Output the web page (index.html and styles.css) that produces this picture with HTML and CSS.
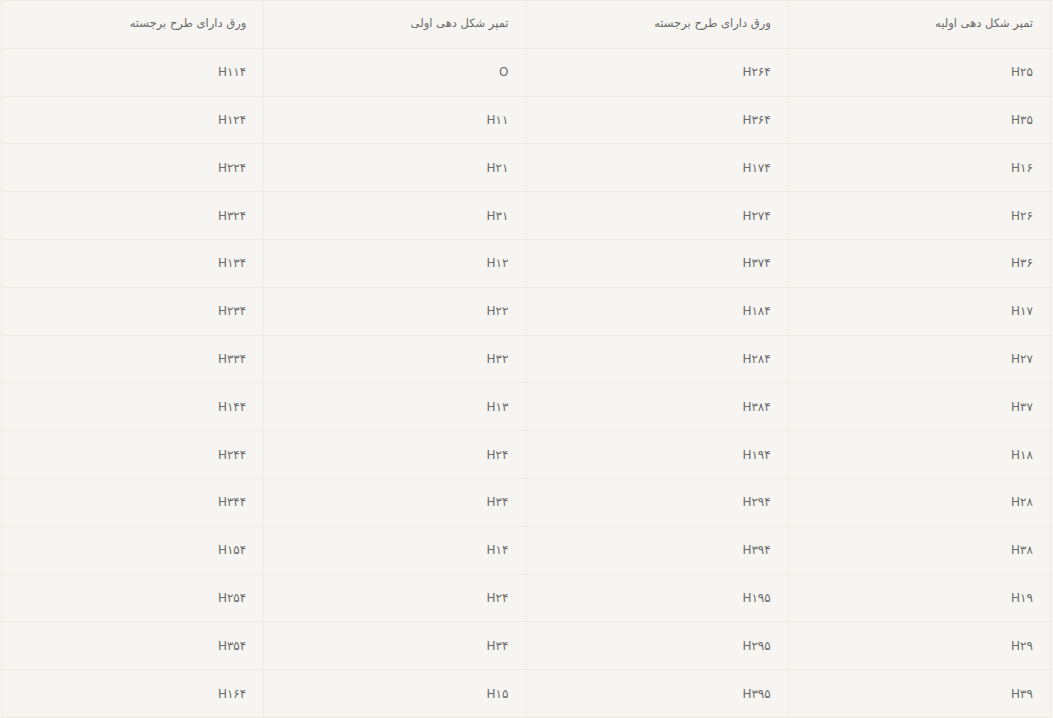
FILE: index.html
```html
<!DOCTYPE html>
<html lang="fa" dir="rtl">
<head>
<meta charset="utf-8">
<link rel="stylesheet" href="styles.css">
</head>
<body>
<table class="grid">
<thead>
<tr><th>تمپر شکل دهی اولیه</th><th>ورق دارای طرح برجسته</th><th>تمپر شکل دهی اولی</th><th>ورق دارای طرح برجسته</th></tr>
</thead>
<tbody>
<tr><td>H۲۵</td><td>H۲۶۴</td><td>O</td><td>H۱۱۴</td></tr>
<tr><td>H۳۵</td><td>H۳۶۴</td><td>H۱۱</td><td>H۱۲۴</td></tr>
<tr><td>H۱۶</td><td>H۱۷۴</td><td>H۲۱</td><td>H۲۲۴</td></tr>
<tr><td>H۲۶</td><td>H۲۷۴</td><td>H۳۱</td><td>H۳۲۴</td></tr>
<tr><td>H۳۶</td><td>H۳۷۴</td><td>H۱۲</td><td>H۱۳۴</td></tr>
<tr><td>H۱۷</td><td>H۱۸۴</td><td>H۲۲</td><td>H۲۳۴</td></tr>
<tr><td>H۲۷</td><td>H۲۸۴</td><td>H۳۲</td><td>H۳۳۴</td></tr>
<tr><td>H۳۷</td><td>H۳۸۴</td><td>H۱۳</td><td>H۱۴۴</td></tr>
<tr><td>H۱۸</td><td>H۱۹۴</td><td>H۲۴</td><td>H۲۴۴</td></tr>
<tr><td>H۲۸</td><td>H۲۹۴</td><td>H۳۴</td><td>H۳۴۴</td></tr>
<tr><td>H۳۸</td><td>H۳۹۴</td><td>H۱۴</td><td>H۱۵۴</td></tr>
<tr><td>H۱۹</td><td>H۱۹۵</td><td>H۲۴</td><td>H۲۵۴</td></tr>
<tr><td>H۲۹</td><td>H۲۹۵</td><td>H۳۴</td><td>H۳۵۴</td></tr>
<tr><td>H۳۹</td><td>H۳۹۵</td><td>H۱۵</td><td>H۱۶۴</td></tr>
</tbody>
</table>
</body>
</html>
```
FILE: styles.css
```css
html, body {
  margin: 0;
  padding: 0;
  background: #f6f5f1;
}
body {
  font-family: "DejaVu Sans", "Noto Sans", sans-serif;
  color: #6b6b6b;
  font-size: 12px;
}
.grid {
  width: 1050px;
  border-collapse: collapse;
  table-layout: fixed;
  margin: 0 2px 0 0;
}
.grid th,
.grid td {
  border: 1px solid #ecebe6;
  text-align: right;
  padding: 0 17px;
  height: 46.8px;
  font-weight: normal;
  vertical-align: middle;
}
.grid th {
  font-size: 11.5px;
  vertical-align: top;
  padding-top: 15px;
  height: 31.8px;
}
```
